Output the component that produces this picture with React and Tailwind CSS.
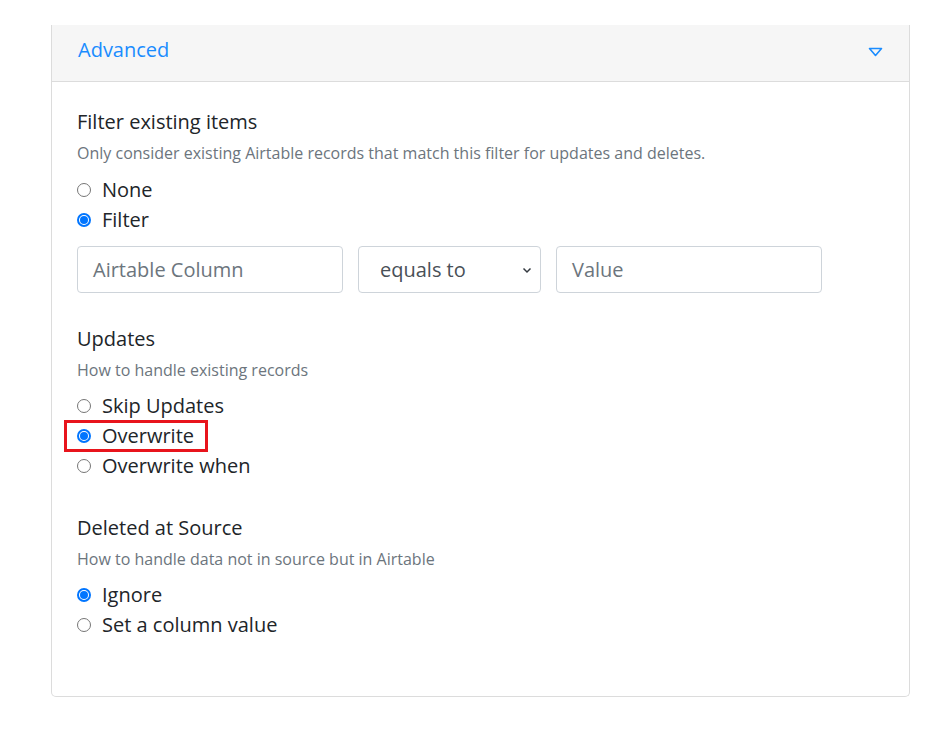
import React, { useState } from "react";

const Radio = ({ label, checked, onChange, highlight }) => (
  <label
    onClick={onChange}
    className="relative flex items-center gap-[11px] h-[30px] text-[20px] text-[#212529] cursor-pointer"
  >
    <span
      className={`w-[14px] h-[14px] rounded-full border flex items-center justify-center bg-white ${
        checked ? "border-[#0075ff] border-[2px]" : "border-[#767676]"
      }`}
    >
      {checked && <span className="w-[8px] h-[8px] rounded-full bg-[#0075ff]" />}
    </span>
    <span>{label}</span>
    {highlight && (
      <span className="absolute left-[-13px] top-[-1px] w-[144px] h-[32px] border-[3px] border-[#e8141c]" />
    )}
  </label>
);

const Section = ({ title, desc, children, first }) => (
  <div>
    <div className="text-[20px] text-[#212529] leading-[26px]">{title}</div>
    <div className="text-[16px] text-[#6c757d] mt-[7px] leading-[22px]">{desc}</div>
    <div className={first ? "mt-[11px]" : "mt-[10px]"}>{children}</div>
  </div>
);

export default function App() {
  const [filter, setFilter] = useState("filter");
  const [updates, setUpdates] = useState("overwrite");
  const [deleted, setDeleted] = useState("ignore");

  return (
    <div
      className="w-[928px] h-[730px] bg-white pt-[25px]"
      style={{ fontFamily: '"Open Sans", "Noto Sans", sans-serif' }}
    >
      <div className="ml-[51px] w-[859px] h-[672px] border border-t-0 border-[#dcdcdc] rounded-b-[5px]">
        <div className="h-[57px] bg-[#f6f6f6] border-b border-[#dcdcdc] flex items-center justify-between pl-[26px] pr-[26px] pb-[6px]">
          <span className="text-[20px] text-[#1a8cff]">Advanced</span>
          <svg width="15" height="10" viewBox="0 0 15 10" className="mt-[4px]">
            <path d="M1.5 1.5 H13.5 L7.5 8.5 Z" fill="none" stroke="#1a8cff" strokeWidth="1.6" strokeLinejoin="round" />
          </svg>
        </div>

        <div className="pl-[25px] pr-[25px] pt-[27px]">
          <Section
            first
            title="Filter existing items"
            desc="Only consider existing Airtable records that match this filter for updates and deletes."
          >
            <Radio label="None" checked={filter === "none"} onChange={() => setFilter("none")} />
            <Radio label="Filter" checked={filter === "filter"} onChange={() => setFilter("filter")} />
            <div className="flex gap-[15px] mt-[11px]">
              <div className="w-[266px] h-[47px] border border-[#ced4da] rounded-[4px] flex items-center px-[15px] text-[20px] text-[#6c757d]">
                Airtable Column
              </div>
              <div className="w-[183px] h-[47px] border border-[#ced4da] rounded-[4px] flex items-center justify-between pl-[21px] pr-[8px] text-[20px] text-[#495057]">
                <span>equals to</span>
                <svg width="10" height="8" viewBox="0 0 10 8">
                  <path d="M1.5 2.5 L5 6 L8.5 2.5" fill="none" stroke="#343a40" strokeWidth="1.5" />
                </svg>
              </div>
              <div className="w-[266px] h-[47px] border border-[#ced4da] rounded-[4px] flex items-center px-[15px] text-[20px] text-[#6c757d]">
                Value
              </div>
            </div>
          </Section>

          <div className="mt-[33px]">
            <Section title="Updates" desc="How to handle existing records">
              <Radio label="Skip Updates" checked={updates === "skip"} onChange={() => setUpdates("skip")} />
              <Radio label="Overwrite" checked={updates === "overwrite"} onChange={() => setUpdates("overwrite")} highlight />
              <Radio label="Overwrite when" checked={updates === "when"} onChange={() => setUpdates("when")} />
            </Section>
          </div>

          <div className="mt-[34px]">
            <Section title="Deleted at Source" desc="How to handle data not in source but in Airtable">
              <Radio label="Ignore" checked={deleted === "ignore"} onChange={() => setDeleted("ignore")} />
              <Radio label="Set a column value" checked={deleted === "set"} onChange={() => setDeleted("set")} />
            </Section>
          </div>
        </div>
      </div>
    </div>
  );
}
